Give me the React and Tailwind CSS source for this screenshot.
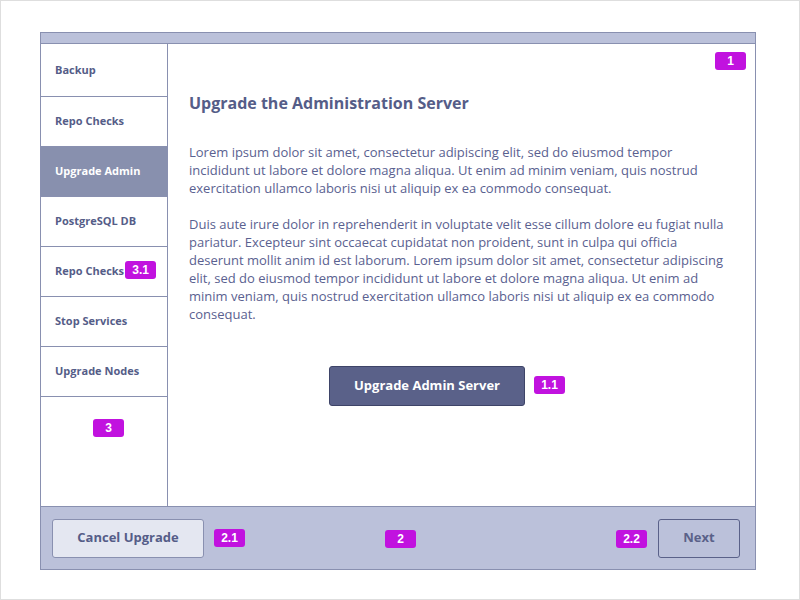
import React from "react";

const steps = [
  "Backup",
  "Repo Checks",
  "Upgrade Admin",
  "PostgreSQL DB",
  "Repo Checks",
  "Stop Services",
  "Upgrade Nodes",
];

function Badge({ children, className = "" }) {
  return (
    <span
      className={`absolute flex items-center justify-center w-[31px] h-[18px] rounded-[3px] bg-[#c112df] text-white text-[12px] font-bold leading-none ${className}`}
      style={{ fontFamily: '"Liberation Sans", Arial, sans-serif' }}
    >
      {children}
    </span>
  );
}

export default function App() {
  return (
    <div
      className="w-[800px] h-[600px] bg-white border border-[#dedede] pl-[39px] pt-[31px] text-[#555d88]"
      style={{ fontFamily: '"Open Sans", sans-serif' }}
    >
      <div className="w-[716px] flex flex-col border border-[#8990b0]">
        <div className="h-[10px] bg-[#bbc1da] border-b border-[#8990b0] box-content" />

        <div className="flex h-[462px]">
          <div className="relative w-[127px] shrink-0 border-r border-[#8990b0]">
            {steps.map((s, i) => (
              <div
                key={i}
                className={`${i === 0 ? "h-[53px]" : "h-[50px]"} flex items-center pl-[14px] border-b border-[#8990b0] text-[11px] font-bold ${
                  i === 2 ? "bg-[#8890ae] text-white" : "text-[#555d88]"
                }`}
              >
                <span className="relative">
                  {s}
                  {i === 4 && <Badge className="left-[calc(100%+1px)] top-[-2px]">3.1</Badge>}
                </span>
              </div>
            ))}
            <Badge className="left-[52px] top-[375px]">3</Badge>
          </div>

          <div className="relative flex-1 pl-[21px] pr-[20px] pt-[49px]">
            <Badge className="right-[9px] top-[8px]">1</Badge>
            <h1 className="text-[16px] font-bold leading-[20px] text-[#555d88]">
              Upgrade the Administration Server
            </h1>
            <div className="mt-[30px] text-[13px] leading-[18px] text-[#5a6190]">
              <p>
                Lorem ipsum dolor sit amet, consectetur adipiscing elit, sed do eiusmod tempor
                incididunt ut labore et dolore magna aliqua. Ut enim ad minim veniam, quis nostrud
                exercitation ullamco laboris nisi ut aliquip ex ea commodo consequat.
              </p>
              <p className="mt-[18px]">
                Duis aute irure dolor in reprehenderit in voluptate velit esse cillum dolore eu fugiat nulla
                pariatur. Excepteur sint occaecat cupidatat non proident, sunt in culpa qui officia
                deserunt mollit anim id est laborum. Lorem ipsum dolor sit amet, consectetur adipiscing
                elit, sed do eiusmod tempor incididunt ut labore et dolore magna aliqua. Ut enim ad
                minim veniam, quis nostrud exercitation ullamco laboris nisi ut aliquip ex ea commodo
                consequat.
              </p>
            </div>
            <div className="relative mt-[43px] ml-[140px] w-[196px]">
              <button className="w-[196px] h-[40px] rounded-[3px] bg-[#5a6189] border border-[#3e4468] text-white text-[13px] font-bold">
                Upgrade Admin Server
              </button>
              <Badge className="left-[205px] top-[10px]">1.1</Badge>
            </div>
          </div>
        </div>

        <div className="relative h-[63px] border-t border-[#8990b0] bg-[#bbc1da] flex items-center justify-between pl-[11px] pr-[15px]">
          <button className="w-[152px] h-[39px] rounded-[3px] bg-[#e4e7f1] border border-[#8990b0] text-[13px] font-bold text-[#555d88]">
            Cancel Upgrade
          </button>
          <Badge className="left-[173px] top-[22px]">2.1</Badge>
          <Badge className="left-[344px] top-[23px]">2</Badge>
          <Badge className="left-[575px] top-[23px]">2.2</Badge>
          <button className="w-[82px] h-[39px] rounded-[3px] border border-[#5a6189] text-[13px] font-bold text-[#5a6189]">
            Next
          </button>
        </div>
      </div>
    </div>
  );
}
